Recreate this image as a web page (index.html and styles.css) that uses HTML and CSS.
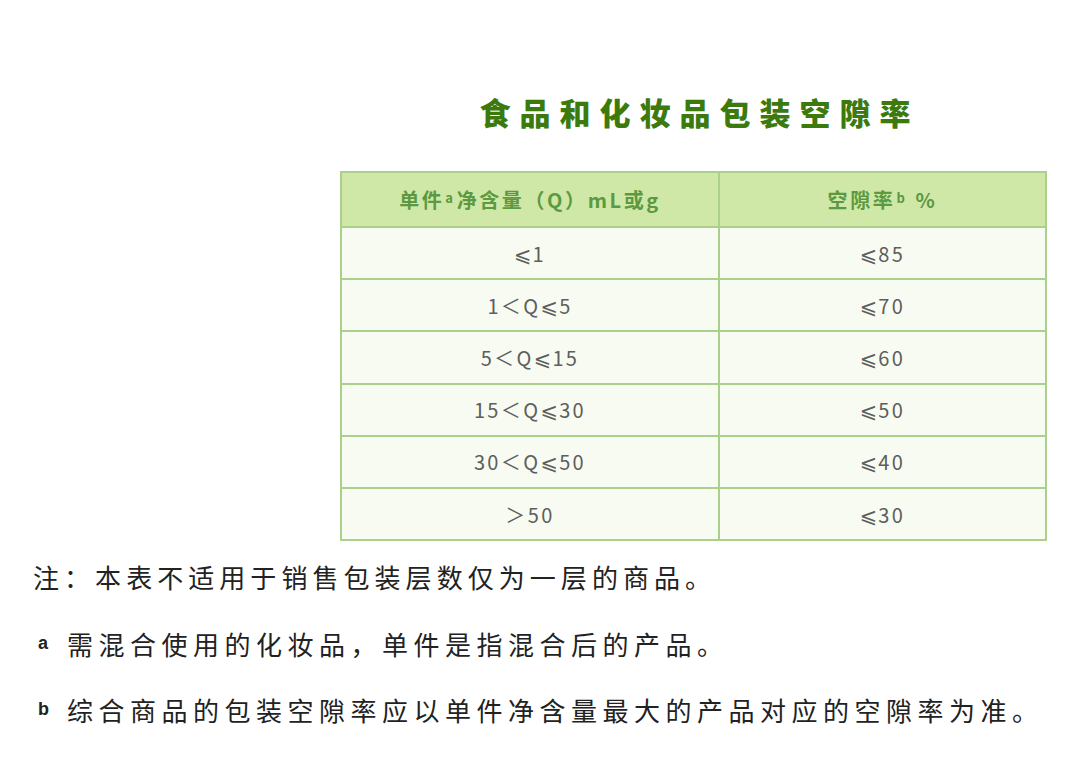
FILE: index.html
```html
<!DOCTYPE html>
<html lang="zh-CN">
<head>
<meta charset="utf-8">
<link rel="stylesheet" href="styles.css">
</head>
<body>
<div class="page">
  <div class="block">
    <h1 class="title">食品和化妆品包装空隙率</h1>
    <table class="tbl">
      <thead>
        <tr><th>单件<sup>a</sup>净含量（Q）mL或g</th><th>空隙率<sup>b</sup> %</th></tr>
      </thead>
      <tbody>
        <tr><td><span class="le">⩽</span>1</td><td><span class="le">⩽</span>85</td></tr>
        <tr><td>1＜Q<span class="le">⩽</span>5</td><td><span class="le">⩽</span>70</td></tr>
        <tr><td>5＜Q<span class="le">⩽</span>15</td><td><span class="le">⩽</span>60</td></tr>
        <tr><td>15＜Q<span class="le">⩽</span>30</td><td><span class="le">⩽</span>50</td></tr>
        <tr><td>30＜Q<span class="le">⩽</span>50</td><td><span class="le">⩽</span>40</td></tr>
        <tr><td>＞50</td><td><span class="le">⩽</span>30</td></tr>
      </tbody>
    </table>
  </div>
  <div class="notes">
    <p class="note">注：本表不适用于销售包装层数仅为一层的商品。</p>
    <p class="note fn"><span class="mark">a</span>需混合使用的化妆品，单件是指混合后的产品。</p>
    <p class="note fn"><span class="mark">b</span>综合商品的包装空隙率应以单件净含量最大的产品对应的空隙率为准。</p>
  </div>
</div>
</body>
</html>
```

FILE: styles.css
```css
html, body {
  margin: 0;
  padding: 0;
  background: #ffffff;
}
.page {
  width: 1080px;
  height: 759px;
  overflow: hidden;
  font-family: "Noto Sans CJK SC", "Noto Sans", sans-serif;
}
.block {
  margin-left: 340px;
  width: 707px;
  padding-top: 92px;
}
.title {
  margin: 0;
  text-align: center;
  font-size: 31px;
  line-height: 40px;
  font-weight: 900;
  color: #3c7a0e;
  letter-spacing: 9px;
  padding-left: 12px;
}
.tbl {
  margin-top: 39px;
  width: 707px;
  border-collapse: collapse;
  table-layout: fixed;
}
.tbl th, .tbl td {
  border: 2px solid #abd08c;
  text-align: center;
  padding: 0;
}
.tbl th {
  background: #cfe8a7;
  height: 53px;
  font-size: 20px;
  font-weight: 700;
  color: #5c9940;
  letter-spacing: 2.6px;
}
.tbl th:first-child { width: 376px; }
.tbl td {
  background: #f7fbf1;
  height: 50.2px;
  font-size: 20px;
  color: #5e5e5e;
  letter-spacing: 2.4px;
}
.le {
  font-family: "DejaVu Sans", sans-serif;
  font-size: 21px;
  letter-spacing: 1px;
}
.tbl sup {
  font-size: 13px;
  vertical-align: 5px;
  line-height: 0;
  margin: 0 1px;
}
.notes {
  padding-top: 19px;
}
.note {
  margin: 0;
  padding-left: 33px;
  font-size: 26px;
  line-height: 34px;
  height: 66.5px;
  color: #222222;
  letter-spacing: 5.05px;
  font-weight: 400;
}
.fn {
  padding-left: 38px;
  letter-spacing: 5.5px;
}
.mark {
  display: inline-block;
  width: 29px;
  line-height: 20px;
  font-family: "Liberation Sans", sans-serif;
  font-weight: 700;
  font-size: 18px;
  letter-spacing: 0;
  position: relative;
  top: -6px;
}
```
